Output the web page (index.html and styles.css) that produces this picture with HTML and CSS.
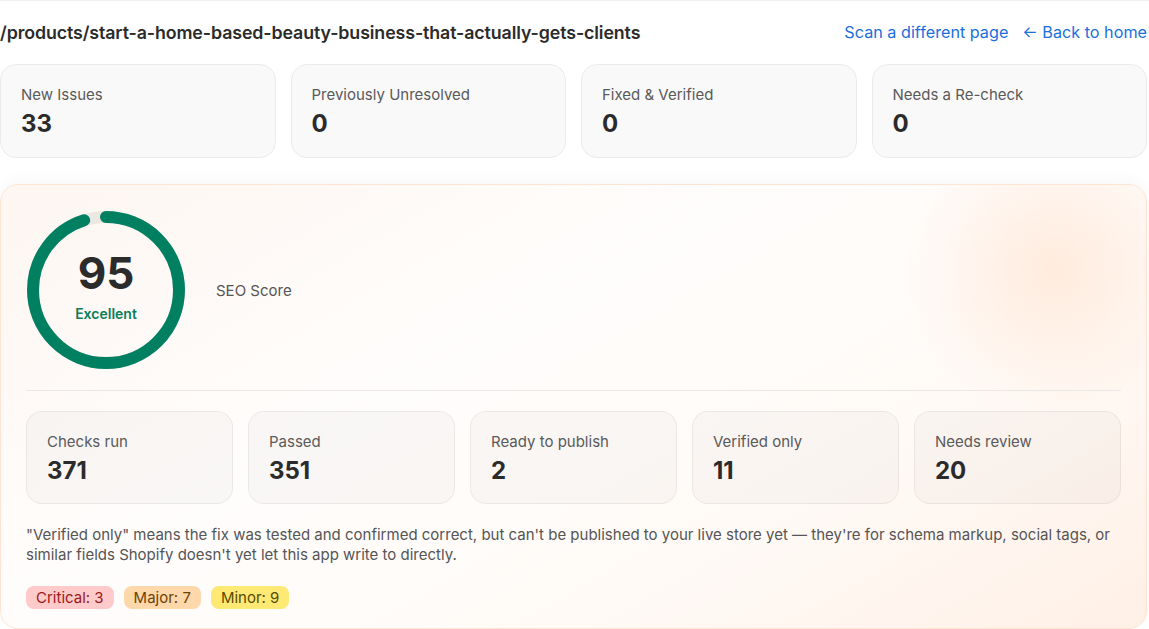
FILE: index.html
```html
<!DOCTYPE html>
<html lang="en">
<head>
    <meta charset="UTF-8">
    <meta name="viewport" content="width=device-width, initial-scale=1.0">
    <title>Scan Results</title>
    <link rel="stylesheet" href="styles.css">
</head>
<body>
    <div class="page">
        <header class="page-header">
            <h1 class="page-path">/products/start-a-home-based-beauty-business-that-actually-gets-clients</h1>
            <nav class="page-links">
                <a href="#">Scan a different page</a>
                <a href="#">&larr; Back to home</a>
            </nav>
        </header>

        <section class="summary">
            <div class="summary-card">
                <p class="summary-label">New Issues</p>
                <p class="summary-value">33</p>
            </div>
            <div class="summary-card">
                <p class="summary-label">Previously Unresolved</p>
                <p class="summary-value">0</p>
            </div>
            <div class="summary-card">
                <p class="summary-label">Fixed &amp; Verified</p>
                <p class="summary-value">0</p>
            </div>
            <div class="summary-card">
                <p class="summary-label">Needs a Re-check</p>
                <p class="summary-value">0</p>
            </div>
        </section>

        <main class="score-panel">
            <div class="score-top">
                <div class="score-ring">
                    <svg width="158" height="158" viewBox="0 0 158 158">
                        <circle class="ring-track" cx="79" cy="79" r="73"></circle>
                        <circle class="ring-bar" cx="79" cy="79" r="73" stroke-dasharray="435.7 458.7"></circle>
                    </svg>
                    <div class="score-text">
                        <span class="score-number">95</span>
                        <span class="score-grade">Excellent</span>
                    </div>
                </div>
                <p class="score-title">SEO Score</p>
            </div>

            <hr class="divider">

            <div class="checks">
                <div class="check-card">
                    <p class="summary-label">Checks run</p>
                    <p class="summary-value">371</p>
                </div>
                <div class="check-card">
                    <p class="summary-label">Passed</p>
                    <p class="summary-value">351</p>
                </div>
                <div class="check-card">
                    <p class="summary-label">Ready to publish</p>
                    <p class="summary-value">2</p>
                </div>
                <div class="check-card">
                    <p class="summary-label">Verified only</p>
                    <p class="summary-value">11</p>
                </div>
                <div class="check-card">
                    <p class="summary-label">Needs review</p>
                    <p class="summary-value">20</p>
                </div>
            </div>

            <p class="note">"Verified only" means the fix was tested and confirmed correct, but can't be published to your live store yet — they're for schema markup, social tags, or similar fields Shopify doesn't yet let this app write to directly.</p>

            <div class="badges">
                <span class="badge critical">Critical: 3</span>
                <span class="badge major">Major: 7</span>
                <span class="badge minor">Minor: 9</span>
            </div>
        </main>
    </div>
</body>
</html>
```

FILE: styles.css
```css
* {
    margin: 0;
    padding: 0;
    box-sizing: border-box;
}
body {
    font-family: 'Inter', 'Liberation Sans', sans-serif;
    background-color: #ffffff;
    color: #2b2b2b;
    border-top: 1px solid #f0f0f0;
}
.page {
    width: 1147px;
    padding-top: 18px;
}
.page-header {
    display: flex;
    justify-content: space-between;
    align-items: center;
    height: 26px;
    margin-bottom: 19px;
}
.page-path {
    font-size: 17.8px;
    font-weight: 600;
    color: #2b2b2b;
    letter-spacing: -0.1px;
}
.page-links {
    display: flex;
    gap: 14px;
}
.page-links a {
    color: #1a6fdc;
    text-decoration: none;
    font-size: 16.2px;
}
.summary {
    display: grid;
    grid-template-columns: repeat(4, 1fr);
    gap: 15px;
    margin-bottom: 26px;
}
.summary-card {
    background-color: #f9f9f9;
    border: 1px solid #ebebeb;
    border-radius: 16px;
    padding: 20px 20px 19px;
    height: 94px;
}
.summary-label {
    font-size: 15px;
    line-height: 20px;
    color: #5a5a5a;
}
.summary-value {
    font-size: 24px;
    line-height: 30px;
    font-weight: 700;
    color: #2b2b2b;
    margin-top: 4px;
}
.score-panel {
    border: 1px solid #fde4d3;
    border-radius: 18px;
    padding: 26px 25px 19px;
    box-shadow: 0 -4px 16px rgba(0, 0, 0, 0.03);
    background:
        radial-gradient(circle at 92% 19%, rgba(255, 222, 200, 0.55), rgba(255, 232, 215, 0) 150px),
        linear-gradient(150deg, #fdf6f1 0%, #fffdfc 40%, #fffaf6 70%, #fff0e6 100%);
}
.score-top {
    display: flex;
    align-items: center;
    gap: 31px;
}
.score-ring {
    position: relative;
    width: 158px;
    height: 158px;
    margin-left: 1px;
}
.score-ring svg {
    transform: rotate(-90deg);
}
.ring-track {
    fill: none;
    stroke: #ebe7e3;
    stroke-width: 12;
}
.ring-bar {
    fill: none;
    stroke: #008060;
    stroke-width: 12;
    stroke-linecap: round;
}
.score-text {
    position: absolute;
    inset: 0;
    display: flex;
    flex-direction: column;
    align-items: center;
    justify-content: center;
    padding-bottom: 7px;
}
.score-number {
    font-size: 44px;
    line-height: 44px;
    font-weight: 700;
    color: #2b2b2b;
}
.score-grade {
    font-size: 14px;
    line-height: 16px;
    font-weight: 600;
    color: #0a7d5a;
    margin-top: 11px;
}
.score-title {
    font-size: 15px;
    color: #555;
}
.divider {
    border: none;
    border-top: 1px solid #ece7e3;
    margin: 21px 0 20px;
}
.checks {
    display: grid;
    grid-template-columns: repeat(5, 1fr);
    gap: 15px;
    margin-bottom: 21px;
}
.check-card {
    background-color: rgba(0, 0, 0, 0.025);
    border: 1px solid rgba(0, 0, 0, 0.06);
    border-radius: 16px;
    padding: 20px 20px 19px;
    height: 93px;
}
.note {
    font-size: 15px;
    line-height: 20px;
    color: #555;
    margin-bottom: 21px;
}
.badges {
    display: flex;
    gap: 10px;
}
.badge {
    display: inline-block;
    font-size: 15px;
    line-height: 23px;
    padding: 0 10px;
    border-radius: 8px;
}
.critical {
    background-color: #fecaca;
    color: #991b1b;
}
.major {
    background-color: #fed7aa;
    color: #6b4406;
}
.minor {
    background-color: #fde974;
    color: #5a4a00;
}
```
